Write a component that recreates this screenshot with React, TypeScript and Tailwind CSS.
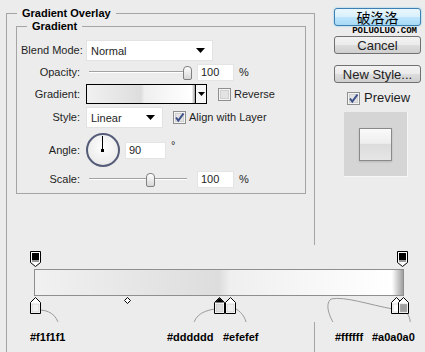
import React from 'react';

const Arrow = () => (
  <svg width="9" height="5" viewBox="0 0 9 5" className="shrink-0">
    <path d="M0 0 H9 L4.5 5 Z" fill="#000" />
  </svg>
);

const Select = ({ value, width }: { value: string; width: string }) => (
  <div className={`${width} flex h-[21px] items-center justify-between border border-[#e2e2e2] bg-white pl-[4px] pr-[7px]`}>
    <span className="pt-[1px]">{value}</span>
    <Arrow />
  </div>
);

const Checkbox = ({ checked }: { checked?: boolean }) => (
  <svg width="13" height="13" viewBox="0 0 13 13" className="shrink-0">
    <rect x="0.5" y="0.5" width="12" height="12" fill="#f4f4f4" stroke="#8e8f8f" />
    <rect x="2.5" y="2.5" width="8" height="8" fill="#e3e3e3" stroke="#d0d0d0" />
    {checked && <path d="M3 6.5 L5.3 9.5 L10.5 2.5" fill="none" stroke="#3b4e88" strokeWidth="2" />}
  </svg>
);

const NumberInput = ({ value, width }: { value: string; width: string }) => (
  <div className={`${width} flex h-[17px] items-center border border-[#e4e4e4] bg-white pl-[3px]`}>{value}</div>
);

const Slider = ({ thumb, track }: { thumb: string; track: string }) => (
  <div className="relative h-full w-[106px] shrink-0">
    <div className={`absolute left-[3px] top-[7px] h-[2px] ${track} border-t border-[#a2a2a2] bg-white`} />
    <div
      className={`absolute top-[2px] ${thumb} h-[14px] w-[9px] rounded-t-[4px] rounded-b-[2px] border border-[#808080] bg-[linear-gradient(to_bottom,#ffffff,#d6d6d6)]`}
    />
  </div>
);

const Row = ({ label, className, children }: { label: string; className: string; children: React.ReactNode }) => (
  <div className={`flex items-center ${className}`}>
    <span className="mr-[6px] w-[59px] shrink-0 whitespace-nowrap text-right">{label}</span>
    {children}
  </div>
);

const Button = ({ children, className = '' }: { children: React.ReactNode; className?: string }) => (
  <div
    className={`flex h-[18px] w-[87px] items-center justify-center rounded-[3px] border border-[#707070] bg-[linear-gradient(to_bottom,#f3f3f3_0%,#ebebeb_50%,#dddddd_51%,#cfcfcf_100%)] text-[13px] leading-none text-[#222] ${className}`}
  >
    {children}
  </div>
);

const stops = [
  { x: 30, color: '#f1f1f1' },
  { x: 214, color: '#dddddd', active: true },
  { x: 225, color: '#efefef' },
  { x: 391, color: '#ffffff' },
  { x: 398, color: '#a0a0a0' },
];

const labels = [
  { x: 30, text: '#f1f1f1' },
  { x: 167, text: '#dddddd' },
  { x: 223, text: '#efefef' },
  { x: 335, text: '#ffffff' },
  { x: 372, text: '#a0a0a0' },
];

const GradientEditor = () => (
  <div className="absolute left-[10px] top-[245px] h-[77px] w-[415px] bg-[#ececec]">
    <div className="absolute left-[24px] top-[24px] h-[27px] w-[370px] border border-[#8f8f8f] bg-[linear-gradient(to_right,#f1f1f1_0%,#dddddd_50%,#efefef_53%,#ffffff_97%,#a0a0a0_100%)]" />
    <svg className="absolute inset-0" width="415" height="77" viewBox="10 245 415 77">
      {[30, 397].map((x) => (
        <g key={x}>
          <path d={`M${x + 0.5} 251.5 H${x + 10.5} V262.5 L${x + 5.5} 266.5 L${x + 0.5} 262.5 Z`} fill="#fff" stroke="#000" />
          <rect x={x + 2} y={253} width={7} height={7} fill="#000" />
          <rect x={x + 2} y={260} width={7} height={2} fill="#9a9a9a" />
        </g>
      ))}
      <path d="M124.5 300.5 L127.5 297.5 L130.5 300.5 L127.5 303.5 Z" fill="#fff" stroke="#000" />
      <g fill="none" stroke="#9a9a9a">
        <path d="M41 310 C52 311 59 318 59 329" />
        <path d="M215 309 C200 311 193 318 193 329" />
        <path d="M236 309 C243 313 247 320 247 329" />
        <path d="M393 309 C370 305 345 296 331 299 C324 305 330 318 337 329" />
        <path d="M406 312 C410 316 411 322 410 329" />
      </g>
      {stops.map((s) => (
        <g key={s.x}>
          <path
            d={`M${s.x + 0.5} 313.5 V302.5 L${s.x + 5.5} 297.5 L${s.x + 10.5} 302.5 V313.5 Z`}
            fill="#fff"
            stroke="#000"
          />
          {s.active && <path d={`M${s.x + 1} 302.5 L${s.x + 5.5} 298 L${s.x + 10} 302.5 Z`} fill="#000" />}
          <rect x={s.x + 2} y={304} width={7} height={8} fill={s.color} stroke="#bdbdbd" strokeWidth="0.5" />
        </g>
      ))}
    </svg>
    {labels.map((l) => (
      <span key={l.text} className="absolute top-[86px] text-[11px] font-bold leading-[13px] text-black" style={{ left: l.x - 10 }}>
        {l.text}
      </span>
    ))}
  </div>
);

export default function App() {
  return (
    <div className="relative flex h-[352px] w-[425px] items-start overflow-hidden bg-[#ececec] font-['Liberation_Sans',Arial,sans-serif] text-[11px] text-[#1e1e1e]">
      <fieldset className="ml-[6px] mt-[7px] h-[400px] w-[309px] shrink-0 border border-[#a5a5a5] pl-[9px] pr-[8px]">
        <legend className="ml-[1px] px-[5px] font-bold leading-[13px] text-black">Gradient Overlay</legend>
        <fieldset className="w-[290px] border border-[#a5a5a5] pb-[6px] pl-[4px]">
          <legend className="ml-[6px] px-[5px] font-bold leading-[13px] text-black">Gradient</legend>
          <div className="flex flex-col">
            <Row label="Blend Mode:" className="mt-[7px] h-[21px]">
              <Select value="Normal" width="w-[127px]" />
            </Row>
            <Row label="Opacity:" className="mt-[3px] h-[17px]">
              <Slider thumb="left-[97px]" track="w-[96px]" />
              <div className="ml-[5px]">
                <NumberInput value="100" width="w-[37px]" />
              </div>
              <span className="ml-[5px]">%</span>
            </Row>
            <Row label="Gradient:" className="mt-[3px] h-[20px]">
              <div className="flex h-[20px] w-[121px] border border-black bg-white">
                <div className="flex-1 bg-[linear-gradient(to_right,#f1f1f1_0%,#dddddd_50%,#efefef_53%,#ffffff_97%,#a0a0a0_100%)]" />
                <div className="flex w-[11px] items-center justify-center border-l border-black bg-[#f6f6f6]">
                  <svg width="7" height="4" viewBox="0 0 7 4">
                    <path d="M0 0 H7 L3.5 4 Z" fill="#000" />
                  </svg>
                </div>
              </div>
              <div className="ml-[11px]">
                <Checkbox />
              </div>
              <span className="ml-[3px]">Reverse</span>
            </Row>
            <Row label="Style:" className="mt-[3px] h-[21px]">
              <Select value="Linear" width="w-[77px]" />
              <div className="ml-[10px]">
                <Checkbox checked />
              </div>
              <span className="ml-[3px]">Align with Layer</span>
            </Row>
            <Row label="Angle:" className="mt-[5px] h-[34px]">
              <div className="relative h-[34px] w-[34px] shrink-0 rounded-full border-[2px] border-[#555c78] bg-[radial-gradient(circle_at_50%_40%,#ffffff,#e4e4e4)]">
                <div className="absolute left-[14px] top-[1px] h-[14px] w-px bg-black" />
                <div className="absolute left-[13px] top-[14px] h-[3px] w-[3px] bg-black" />
              </div>
              <div className="ml-[5px]">
                <NumberInput value="90" width="w-[41px]" />
              </div>
              <span className="ml-[5px] self-start pt-[4px]">°</span>
            </Row>
            <Row label="Scale:" className="mt-[4px] h-[16px]">
              <Slider thumb="left-[60px]" track="w-[98px]" />
              <div className="ml-[5px]">
                <NumberInput value="100" width="w-[37px]" />
              </div>
              <span className="ml-[5px]">%</span>
            </Row>
          </div>
        </fieldset>
      </fieldset>

      <div className="ml-[19px] mt-[8px] flex w-[87px] flex-col">
        <div className="flex h-[18px] w-[87px] items-center justify-center rounded-[3px] border border-[#3c7fb1] bg-[linear-gradient(to_bottom,#eaf7fd_0%,#d9f0fc_50%,#bee6fd_51%,#a7d9f5_100%)] shadow-[0_0_2px_#6fc3ef] font-['Noto_Sans_CJK_SC',sans-serif] text-[14px] leading-none text-black">
          破洛洛
        </div>
        <div className="h-[10px] pr-[4px] text-right font-['Liberation_Mono',monospace] text-[9px] font-bold leading-[10px] text-black">
          POLUOLUO.COM
        </div>
        <Button>Cancel</Button>
        <Button className="mt-[11px]">New Style...</Button>
        <div className="ml-[13px] mt-[8px] flex h-[14px] items-center gap-[4px] text-[13px]">
          <Checkbox checked />
          <span>Preview</span>
        </div>
        <div className="ml-[10px] mt-[7px] flex h-[65px] w-[64px] items-center justify-center border-b border-r border-[#f6f6f6] bg-[#d5d5d5]">
          <div className="h-[33px] w-[33px] border border-[#8a8a8a] bg-[linear-gradient(to_bottom,#fafafa_0%,#eeeeee_46%,#dcdcdc_50%,#e6e6e6_100%)] shadow-[0_1px_2px_rgba(0,0,0,0.15)]" />
        </div>
      </div>

      <GradientEditor />
    </div>
  );
}
